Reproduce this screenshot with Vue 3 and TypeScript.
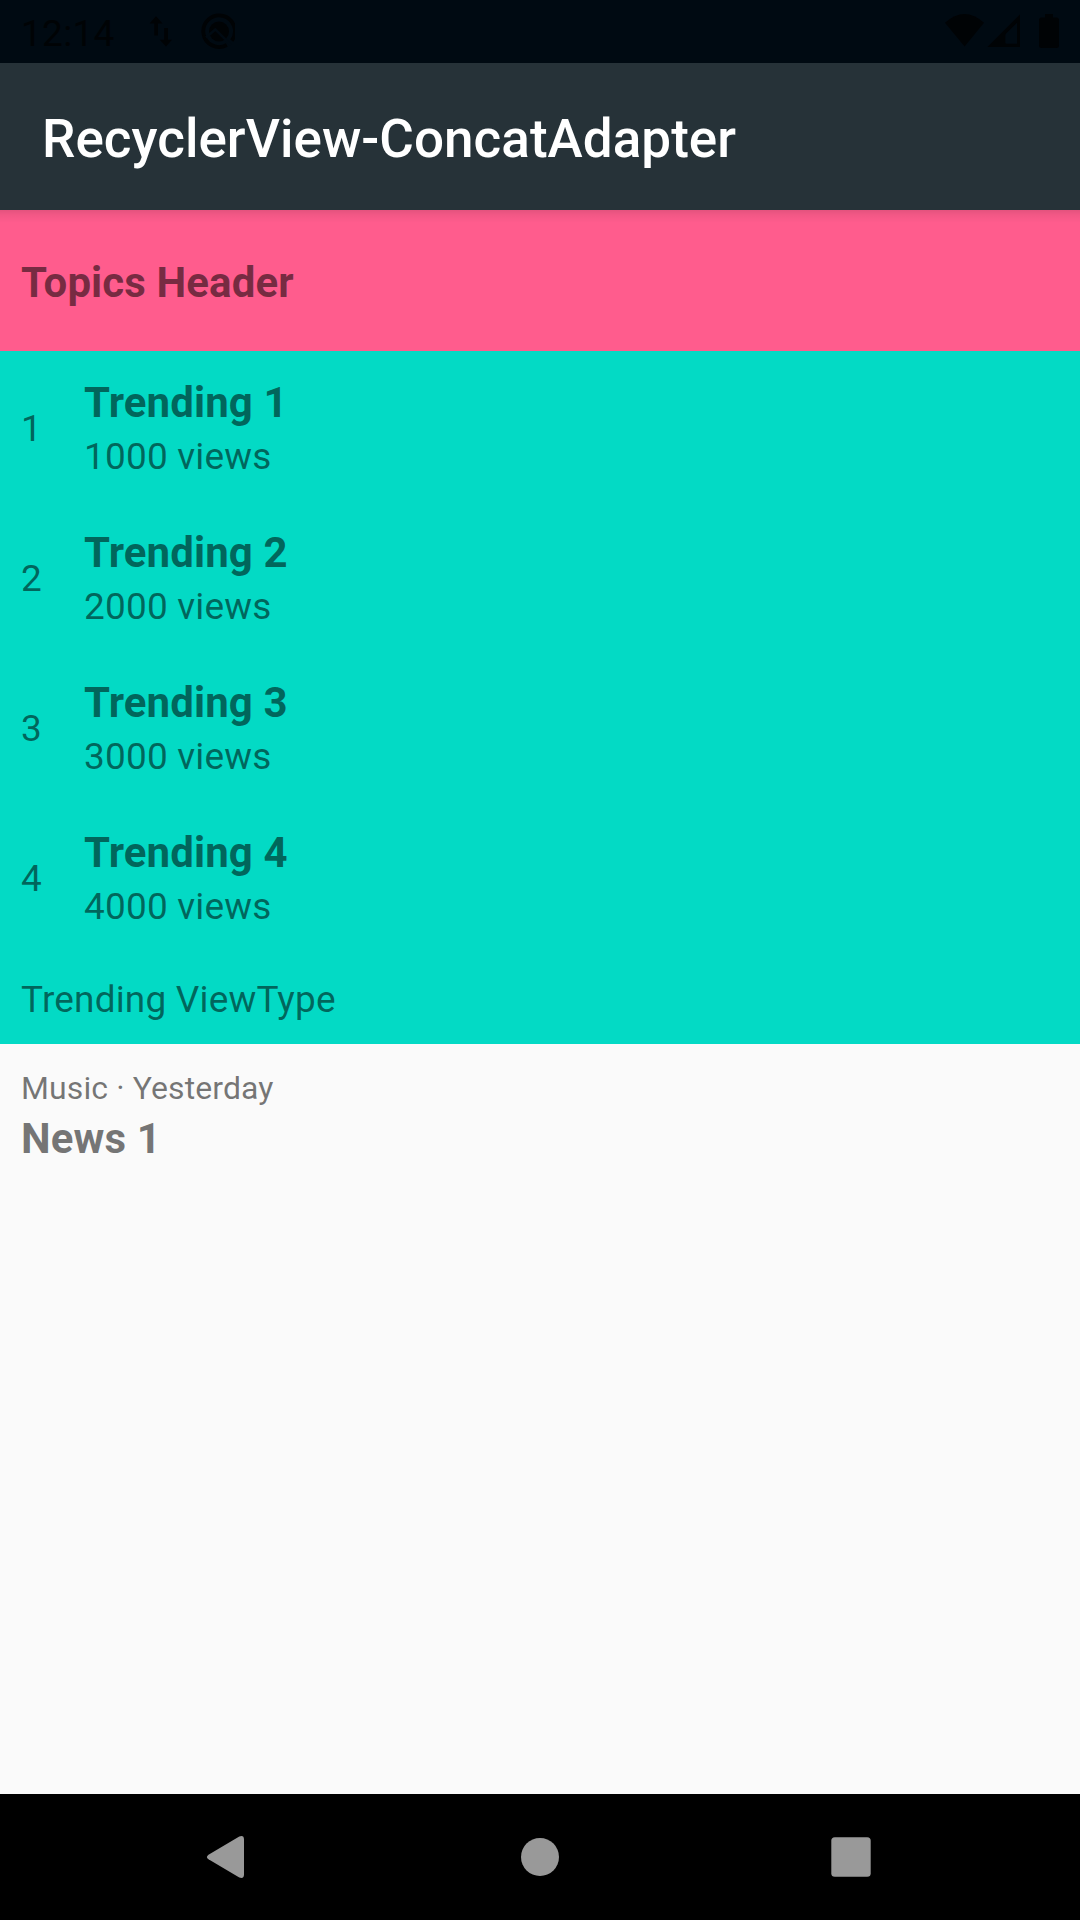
<script setup lang="ts">
interface Trend {
  rank: number
  title: string
  views: string
}

const trends: Trend[] = [1, 2, 3, 4].map((n) => ({
  rank: n,
  title: `Trending ${n}`,
  views: `${n * 1000} views`,
}))
</script>

<template>
  <div class="screen">
    <header class="status">
      <span class="clock">12:14</span>
      <svg class="left-icons" width="90" height="63" viewBox="145 0 90 63">
        <path d="M156 16.3 L162.5 23.6 H158 V35.5 H154.3 V23.6 H149.6 Z" />
        <path d="M164.2 28 H168 V39.8 H172 L166 46.6 L159.8 39.8 H164.2 Z" />
        <path class="ring" d="M226.8 45 A15.8 15.8 0 1 1 231.8 40.6" />
        <circle cx="219" cy="31.5" r="10" />
        <path class="cut" d="M206 37.5 L215.3 29.4 L231 45" />
      </svg>
      <svg class="right-icons" width="120" height="63" viewBox="940 0 120 63">
        <path d="M945 22.8 Q964.5 5.2 984 22.8 L964.6 46.6 Z" />
        <path fill-rule="evenodd" d="M1020 14.5 V47 H987.5 Z M1017 22.8 L1006 33.5 Q1005.3 34.3 1005.3 35.5 V42.5 Q1005.3 43.7 1006.5 43.7 H1017 Z" />
        <path d="M1045 14 H1053 V17.5 H1056.5 Q1059 17.5 1059 20 V45.5 Q1059 48 1056.5 48 H1041.5 Q1039 48 1039 45.5 V20 Q1039 17.5 1041.5 17.5 H1045 Z" />
      </svg>
    </header>
    <div class="toolbar"><h1>RecyclerView-ConcatAdapter</h1></div>
    <main class="list">
      <section class="topics"><h2>Topics Header</h2></section>
      <section class="trending">
        <article v-for="t in trends" :key="t.rank" class="trend">
          <span class="rank">{{ t.rank }}</span>
          <div class="info">
            <h2>{{ t.title }}</h2>
            <p>{{ t.views }}</p>
          </div>
        </article>
        <p class="caption">Trending ViewType</p>
      </section>
      <article class="news">
        <p>Music · Yesterday</p>
        <h2>News 1</h2>
      </article>
    </main>
    <nav class="navbar">
      <svg width="1080" height="126" viewBox="0 0 1080 126">
        <path d="M208.5 60.7 L239.3 42.5 Q244 40.8 244 45.5 V80.5 Q244 85.2 239.3 83.5 L208.5 65.3 Q205.3 63 208.5 60.7 Z" />
        <circle cx="540" cy="63" r="19" />
        <rect x="831.3" y="43.3" width="39.4" height="39.4" rx="3.5" />
      </svg>
    </nav>
  </div>
</template>

<style>
body {
  margin: 0;
}
</style>

<style scoped>
.screen {
  width: 1080px;
  height: 1920px;
  display: flex;
  flex-direction: column;
  background: #fafafa;
  font-family: Roboto, "Liberation Sans", sans-serif;
  color: rgba(0, 0, 0, 0.54);
}
h1,
h2,
p {
  margin: 0;
}
svg {
  display: block;
}
.status {
  box-sizing: border-box;
  height: 63px;
  padding: 0 20px 0 21px;
  display: flex;
  align-items: center;
  background: #000a12;
  color: #000305;
  fill: #000305;
}
.clock {
  width: 124px;
  padding-top: 4px;
  font-size: 37px;
  line-height: 50px;
  letter-spacing: 0.3px;
}
.ring {
  fill: none;
  stroke: #000305;
  stroke-width: 3.8px;
}
.cut {
  fill: none;
  stroke: #000a12;
  stroke-width: 2.6px;
}
.right-icons {
  margin-left: auto;
}
.toolbar {
  box-sizing: border-box;
  height: 147px;
  padding: 45px 42px 0;
  background: #263238;
}
h1 {
  font-size: 53px;
  line-height: 62px;
  font-weight: 500;
  letter-spacing: 0.04px;
  color: #fff;
}
h2 {
  font-size: 42px;
  line-height: 57px;
  font-weight: 700;
  letter-spacing: 0.1px;
}
.list {
  flex: 1;
}
.topics {
  box-sizing: border-box;
  height: 141px;
  padding: 44px 21px 0;
  background: linear-gradient(rgba(0, 0, 0, 0.11), rgba(0, 0, 0, 0.05) 5px, transparent 13px) #ff5c8d;
}
.trending {
  height: 693px;
  background: #03dac5;
}
.trend {
  box-sizing: border-box;
  height: 150px;
  padding: 23px 21px 0;
  display: flex;
}
.rank,
.info p,
.caption {
  font-size: 37px;
  line-height: 50px;
  letter-spacing: 0.17px;
}
.rank {
  width: 63px;
  padding-top: 30px;
}
.info p {
  padding-top: 1px;
}
.caption {
  padding: 24px 21px 0;
}
.news {
  padding: 23px 21px 0;
}
.news p {
  font-size: 32px;
  line-height: 43px;
  letter-spacing: 0.1px;
}
.navbar {
  height: 126px;
  background: #000;
  fill: #999;
}
</style>
